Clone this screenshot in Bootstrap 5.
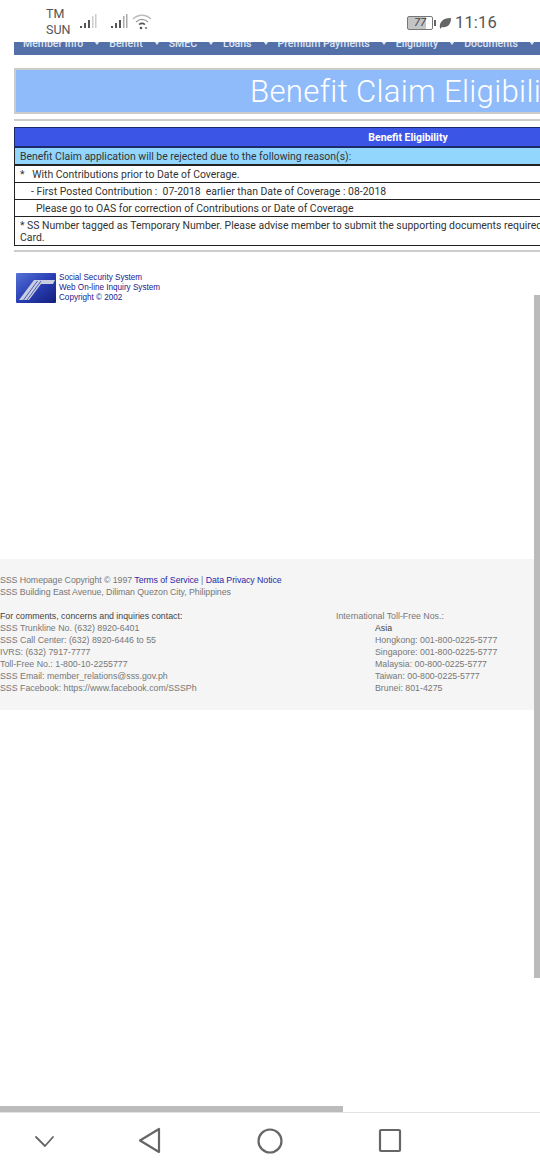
<!DOCTYPE html>
<html lang="en">
<head>
  <meta charset="UTF-8">
  <title>Benefit Claim Eligibility</title>
  <meta name="viewport" content="width=device-width, initial-scale=1">
  <link href="https://cdn.jsdelivr.net/npm/bootstrap@5.3.3/dist/css/bootstrap.min.css" rel="stylesheet">
  <style>
    html, body { width: 540px; height: 1170px; overflow: hidden; background: #fff; }
    body { font-family: Roboto, "Liberation Sans", sans-serif; position: relative; }
    .status-bar { height: 42px; padding-left: 46px; color: #555; }
    .carrier { font-size: 12.5px; line-height: 16px; width: 33px; padding-top: 6px; }
    .signal-a { margin-top: 13px; }
    .signal-b { margin-left: 13px; margin-top: 13px; }
    .wifi { margin-left: 4px; margin-top: 13px; }
    .status-right { position: absolute; right: 43px; top: 13px; }
    .batt { width: 26px; height: 14px; border: 1px solid #777; border-radius: 2px; font-size: 11px; line-height: 12px; text-align: center; font-style: italic; color: #444; background: linear-gradient(90deg, #c4c4c4 77%, #fff 77%); }
    .batt-tip { width: 2px; height: 6px; background: #666; margin: 0 3px 0 1px; }
    .clock { font-size: 16.5px; line-height: 20px; color: #555; margin-left: 4px; letter-spacing: .2px; }
    .menu-bar { height: 13px; margin-left: 14px; background: #5470a8; overflow: hidden; white-space: nowrap; color: #dfe6f5; font-weight: 500; font-size: 10.5px; line-height: 12px; }
    .menu-row { margin-top: -4px; padding-left: 9px; }
    .menu-item { display: inline-block; }
    .menu-caret { display: inline-block; width: 0; height: 0; border-left: 3.5px solid transparent; border-right: 3.5px solid transparent; border-top: 4px solid #dfe6f5; vertical-align: 2px; margin: 0 9px 0 11px; }
    .title-box { height: 46px; margin: 13px 0 0 14px; background: #8fbbfb; border: 2px solid #ccc; border-right: 0; color: #fff; font-size: 31.2px; font-weight: 300; letter-spacing: .3px; line-height: 44px; padding-left: 234px; white-space: nowrap; overflow: hidden; }
    .rule { height: 2px; background: #ccc; margin-left: 14px; }
    .rule-top { margin-top: 5px; }
    .rule-bottom { margin-top: 4px; }
    .elig-wrap { margin: 6px 0 0 14px; width: 788px; }
    .elig-table { width: 788px; font-size: 10.45px; color: #333; border-collapse: collapse; }
    .elig-table td { border: 1px solid #222; padding: 3px 5px 1px; line-height: 12px; background: #fff; }
    .elig-table td.elig-head { background: #3b56e6; color: #fff; text-align: center; font-weight: 700; padding: 4px 5px 2px; border-color: #1c2a6a; border-width: 1px 1px 2px; }
    .elig-table td.elig-note { background: #93d6fd; padding: 3px 5px 1px; border-bottom: 2px solid #222; }
    .elig-table td.elig-sub { padding-left: 16px; }
    .elig-table td.elig-action { padding-left: 21px; }
    .logo-row { margin: 21px 0 0 16px; }
    .logo-text { font-size: 8.15px; line-height: 10px; color: #22228c; margin-left: 3px; font-family: "Liberation Sans", sans-serif; }
    .site-foot { margin-top: 256px; width: 534px; height: 151px; background: #f5f5f5; padding-top: 15px; font-family: "Liberation Sans", sans-serif; font-size: 8.8px; line-height: 12px; color: #777; }
    .site-foot a { color: #2a2aa5; text-decoration: none; }
    .foot-tight { letter-spacing: -.07px; }
    .foot-gap { height: 12px; }
    .foot-strong { color: #444; }
    .foot-left { width: 336px; }
    .foot-asia { padding-left: 39px; }
    .scroll-v { position: absolute; left: 534px; top: 295px; width: 6px; height: 683px; background: #bbb; }
    .scroll-h { position: absolute; left: 0; top: 1106px; width: 343px; height: 6px; background: #bbb; }
    .nav-keys { position: absolute; left: 0; right: 0; top: 1112px; height: 58px; border-top: 1px solid #e2e2e2; background: #fff; }
  </style>
</head>
<body>
  <div class="status-bar d-flex">
    <div class="carrier">TM<br>SUN</div>
    <svg class="signal-a" width="18" height="17" viewBox="0 0 18 17"><g fill="#555"><rect x="1" y="13" width="2" height="2"/><rect x="5" y="10" width="2" height="5"/><rect x="9" y="7" width="2" height="8"/></g><g fill="#ccc"><rect x="13" y="3" width="1.5" height="12"/><rect x="16" y="1" width="1.5" height="14"/></g></svg>
    <svg class="signal-b" width="18" height="17" viewBox="0 0 18 17"><g fill="#555"><rect x="1" y="13" width="2" height="2"/><rect x="5" y="10" width="2" height="5"/><rect x="9" y="7" width="2" height="8"/></g><g fill="#aaa"><rect x="13" y="3" width="1.5" height="12"/><rect x="16" y="1" width="1.5" height="14"/></g></svg>
    <svg class="wifi" width="20" height="17" viewBox="0 0 20 17" fill="none"><path d="M1 6C6 1 14 1 19 6" stroke="#bbb" stroke-width="1.3"/><path d="M4 9C8 5.500 12 5.500 16 9" stroke="#999" stroke-width="1.3"/><path d="M7 11.500C9 10 11 10 13 11.500" stroke="#555" stroke-width="1.5"/><circle cx="9" cy="15" r="1.300" fill="#555"/><circle cx="14" cy="15" r="1.100" fill="#777"/></svg>
    <div class="status-right d-flex align-items-center">
      <div class="batt">77</div>
      <div class="batt-tip"></div>
      <svg width="12" height="12" viewBox="0 0 12 12"><path d="M1 11C0 6 3 1 12 1C12 8 8 11 3 10L1 12Z" fill="#666"/></svg>
      <div class="clock">11:16</div>
    </div>
  </div>

  <div class="menu-bar">
    <div class="menu-row">
      <span class="menu-item">Member Info</span><span class="menu-caret"></span><span class="menu-item">Benefit</span><span class="menu-caret"></span><span class="menu-item">SMEC</span><span class="menu-caret"></span><span class="menu-item">Loans</span><span class="menu-caret"></span><span class="menu-item">Premium Payments</span><span class="menu-caret"></span><span class="menu-item">Eligibility</span><span class="menu-caret"></span><span class="menu-item">Documents</span><span class="menu-caret"></span>
    </div>
  </div>

  <div class="title-box">Benefit Claim Eligibility</div>
  <div class="rule rule-top"></div>

  <div class="elig-wrap">
    <table class="elig-table">
      <tr><td class="elig-head">Benefit Eligibility</td></tr>
      <tr><td class="elig-note">Benefit Claim application will be rejected due to the following reason(s):</td></tr>
      <tr><td>*&nbsp;&nbsp; With Contributions prior to Date of Coverage.</td></tr>
      <tr><td class="elig-sub">- First Posted Contribution :&nbsp; 07-2018&nbsp; earlier than Date of Coverage : 08-2018</td></tr>
      <tr><td class="elig-action">Please go to OAS for correction of Contributions or Date of Coverage</td></tr>
      <tr><td>* SS Number tagged as Temporary Number. Please advise member to submit the supporting documents required for SS<br>Card.</td></tr>
    </table>
  </div>
  <div class="rule rule-bottom"></div>

  <div class="logo-row d-flex">
    <svg width="40" height="30" viewBox="0 0 40 30">
      <defs><linearGradient id="logoFill" x1="0" y1="0" x2="1" y2="1"><stop offset="0" stop-color="#5573d6"/><stop offset=".5" stop-color="#2a3fb4"/><stop offset="1" stop-color="#141f7c"/></linearGradient></defs>
      <rect width="40" height="30" rx="1" fill="url(#logoFill)"/>
      <path d="M3 27L18 7H39L37 11H25L13 27Z" fill="#c8cde0"/>
      <path d="M7.500 27L21.500 8M11 27L25 8" stroke="#4a5cb8" stroke-width="1"/>
    </svg>
    <div class="logo-text">Social Security System<br>Web On-line Inquiry System<br>Copyright © 2002</div>
  </div>

  <div class="site-foot">
    <div class="foot-tight">SSS Homepage Copyright © 1997 <a href="#">Terms of Service</a> | <a href="#">Data Privacy Notice</a></div>
    <div class="foot-tight">SSS Building East Avenue, Diliman Quezon City, Philippines</div>
    <div class="foot-gap"></div>
    <div class="d-flex">
      <div class="foot-left">
        <div class="foot-strong">For comments, concerns and inquiries contact:</div>
        <div>SSS Trunkline No. (632) 8920-6401</div>
        <div>SSS Call Center: (632) 8920-6446 to 55</div>
        <div>IVRS: (632) 7917-7777</div>
        <div>Toll-Free No.: 1-800-10-2255777</div>
        <div>SSS Email: member_relations@sss.gov.ph</div>
        <div>SSS Facebook: https://www.facebook.com/SSSPh</div>
      </div>
      <div>
        <div>International Toll-Free Nos.:</div>
        <div class="foot-asia">
          <div class="foot-strong">Asia</div>
          <div>Hongkong: 001-800-0225-5777</div>
          <div>Singapore: 001-800-0225-5777</div>
          <div>Malaysia: 00-800-0225-5777</div>
          <div>Taiwan: 00-800-0225-5777</div>
          <div>Brunei: 801-4275</div>
        </div>
      </div>
    </div>
  </div>

  <div class="scroll-v"></div>
  <div class="scroll-h"></div>

  <div class="nav-keys">
    <svg width="540" height="57" viewBox="0 0 540 57" fill="none" stroke="#666" stroke-linejoin="round" stroke-linecap="round">
      <path d="M36 24L45 33L53 24" stroke-width="1.800"/>
      <path d="M159 16V39L140 27.500Z" stroke-width="2.200"/>
      <circle cx="270" cy="28" r="11.500" stroke-width="2.200"/>
      <rect x="380" y="17" width="20" height="21" rx="1" stroke-width="2.200"/>
    </svg>
  </div>
</body>
</html>
